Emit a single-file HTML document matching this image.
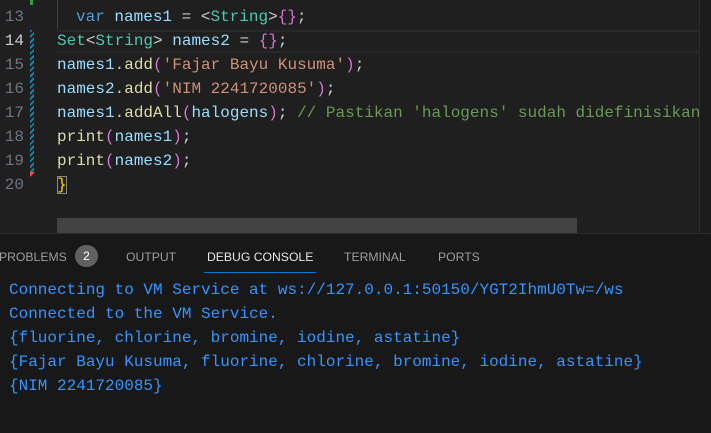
<!DOCTYPE html>
<html><head><meta charset="utf-8"><style>
*{margin:0;padding:0;box-sizing:border-box}
body{width:711px;height:433px;overflow:hidden;background:#1f1f1f;position:relative;font-family:"Liberation Mono",monospace;font-size:16px}
.ln{position:absolute;left:0;width:24px;text-align:right;color:#6e7681;line-height:24px}
.code{position:absolute;left:57px;line-height:24px;white-space:pre}
.t{color:#4ec9b0}.v{color:#9cdcfe}.k{color:#569cd6}.s{color:#ce9178}.f{color:#dcdcaa}.c{color:#6a9955}.p{color:#da70d6}.b{color:#179fff}.w{color:#cccccc}.y{color:#ffd700}
#panel{position:absolute;left:0;top:233px;width:711px;height:200px;background:#181818;border-top:1px solid #2b2b2b}
.tab{position:absolute;top:16px;font-family:"Liberation Sans",sans-serif;font-size:12.2px;color:#9d9d9d}
.out{position:absolute;left:9px;top:44px;line-height:24px;color:#3794ff;white-space:pre}
</style></head><body>
<div style="position:absolute;left:30px;top:0;width:3px;height:5px;background:#2ea043"></div>
<div style="position:absolute;left:57px;top:0;width:1px;height:29px;background:#404040"></div>
<div style="position:absolute;left:57px;top:30px;width:642px;height:23px;border-top:2px solid #282828;border-bottom:2px solid #282828"></div>
<div style="position:absolute;left:30px;top:30px;width:4px;height:142px;background:repeating-linear-gradient(135deg,#1b81a8 0 2px,#1f1f1f 2px 4px)"></div>
<div style="position:absolute;left:30px;top:172px;width:0;height:0;border-left:5px solid #f14c4c;border-bottom:5px solid transparent"></div>
<div class="ln" style="top:5px">13</div>
<div class="ln" style="top:29px;color:#cccccc">14</div>
<div class="ln" style="top:53px">15</div>
<div class="ln" style="top:77px">16</div>
<div class="ln" style="top:101px">17</div>
<div class="ln" style="top:125px">18</div>
<div class="ln" style="top:149px">19</div>
<div class="ln" style="top:173px">20</div>
<div class="code" style="top:5px;left:76px"><span class="k">var</span> <span class="v">names1</span> <span class="w">=</span> <span class="w">&lt;</span><span class="t">String</span><span class="w">&gt;</span><span class="p">{}</span><span class="w">;</span></div>
<div class="code" style="top:29px"><span class="t">Set</span><span class="w">&lt;</span><span class="t">String</span><span class="w">&gt;</span> <span class="v">names2</span> <span class="w">=</span> <span class="p">{}</span><span class="w">;</span></div>
<div class="code" style="top:53px"><span class="v">names1</span><span class="w">.</span><span class="f">add</span><span class="p">(</span><span class="s">'Fajar Bayu Kusuma'</span><span class="p">)</span><span class="w">;</span></div>
<div class="code" style="top:77px"><span class="v">names2</span><span class="w">.</span><span class="f">add</span><span class="p">(</span><span class="s">'NIM 2241720085'</span><span class="p">)</span><span class="w">;</span></div>
<div class="code" style="top:101px"><span class="v">names1</span><span class="w">.</span><span class="f">addAll</span><span class="p">(</span><span class="v">halogens</span><span class="p">)</span><span class="w">;</span> <span class="c">// Pastikan 'halogens' sudah didefinisikan</span></div>
<div class="code" style="top:125px"><span class="f">print</span><span class="p">(</span><span class="v">names1</span><span class="p">)</span><span class="w">;</span></div>
<div class="code" style="top:149px"><span class="f">print</span><span class="p">(</span><span class="v">names2</span><span class="p">)</span><span class="w">;</span></div>
<div class="code" style="top:173px"><span class="y" style="outline:1px solid #888;outline-offset:-1px">}</span></div>
<div style="position:absolute;left:699px;top:0;width:12px;height:233px;background:#1b1b1b;border-left:1px solid #2a2a2a"></div>
<div style="position:absolute;left:57px;top:218px;width:520px;height:15px;background:#424242"></div>
<div id="panel">
<div class="tab" style="left:-1px">PROBLEMS</div>
<div style="position:absolute;left:75px;top:11px;width:23px;height:22px;border-radius:11px;background:#616161;color:#fff;font-family:'Liberation Sans',sans-serif;font-size:12px;text-align:center;line-height:22px">2</div>
<div class="tab" style="left:126px">OUTPUT</div>
<div class="tab" style="left:207px;color:#e7e7e7">DEBUG CONSOLE</div>
<div style="position:absolute;left:204px;top:38px;width:112px;height:1px;background:#0078d4"></div>
<div class="tab" style="left:344px">TERMINAL</div>
<div class="tab" style="left:438px">PORTS</div>
<div class="out">Connecting to VM Service at ws://127.0.0.1:50150/YGT2IhmU0Tw=/ws
Connected to the VM Service.
{fluorine, chlorine, bromine, iodine, astatine}
{Fajar Bayu Kusuma, fluorine, chlorine, bromine, iodine, astatine}
{NIM 2241720085}</div>
</div>
</body></html>
